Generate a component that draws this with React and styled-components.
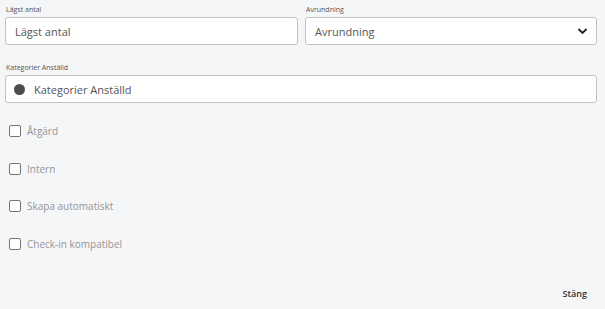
import React from 'react'
import styled, { createGlobalStyle } from 'styled-components'

const Global = createGlobalStyle`
  html, body {
    margin: 0;
    padding: 0;
    background: #f5f6f8;
    font-family: "Open Sans", "Noto Sans", sans-serif;
  }
`

const Page = styled.div`
  width: 605px;
  height: 309px;
  box-sizing: border-box;
  padding: 5px 8px 0 5px;
  display: flex;
  flex-direction: column;
`

const Row = styled.div`
  display: grid;
  grid-template-columns: ${p => p.cols || '1fr'};
  gap: 7px;
  margin-bottom: ${p => p.mb || 0}px;
`

const Field = styled.div`
  display: flex;
  flex-direction: column;
`

const Label = styled.label`
  font-size: 7px;
  color: #555;
  line-height: 10px;
  margin: 0 0 2px 1px;
`

const Box = styled.div`
  height: 28px;
  box-sizing: border-box;
  background: #fff;
  border: 1px solid #bfc3c8;
  border-radius: 3px;
  display: flex;
  align-items: center;
  padding: 0 8px 0 9px;
  font-size: 11px;
  color: #555;
  gap: 9px;
`

const Grow = styled.span`
  flex: 1;
`

const Dot = styled.span`
  width: 11px;
  height: 11px;
  border-radius: 50%;
  background: #4d4d4d;
  margin-left: -1px;
`

const Checks = styled.div`
  display: flex;
  flex-direction: column;
  gap: 23.5px;
  margin: 21px 0 0 4px;
`

const CheckRow = styled.label`
  display: flex;
  align-items: center;
  gap: 6px;
  font-size: 10px;
  color: #959595;
  height: 14px;
`

const CheckBox = styled.span`
  width: 12px;
  height: 12px;
  box-sizing: border-box;
  border: 1.5px solid #757575;
  border-radius: 2px;
  background: #fff;
`

const Footer = styled.div`
  margin-top: auto;
  display: flex;
  justify-content: flex-end;
  padding: 0 10px 9px 0;
`

const CloseBtn = styled.span`
  font-size: 9px;
  font-weight: 600;
  color: #333;
`

const Chevron = () => (
  <svg width="11" height="8" viewBox="0 0 11 8">
    <path d="M1.5 2 L5.5 6 L9.5 2" fill="none" stroke="#222" strokeWidth="1.8" />
  </svg>
)

const items = ['Åtgärd', 'Intern', 'Skapa automatiskt', 'Check-in kompatibel']

export default function App() {
  return (
    <>
      <Global />
      <Page>
        <Row cols="293px 1fr" mb={18}>
          <Field>
            <Label>Lägst antal</Label>
            <Box>Lägst antal</Box>
          </Field>
          <Field>
            <Label>Avrundning</Label>
            <Box>
              <Grow>Avrundning</Grow>
              <Chevron />
            </Box>
          </Field>
        </Row>
        <Row>
          <Field>
            <Label>Kategorier Anställd</Label>
            <Box>
              <Dot />
              Kategorier Anställd
            </Box>
          </Field>
        </Row>
        <Checks>
          {items.map(t => (
            <CheckRow key={t}>
              <CheckBox />
              {t}
            </CheckRow>
          ))}
        </Checks>
        <Footer>
          <CloseBtn>Stäng</CloseBtn>
        </Footer>
      </Page>
    </>
  )
}
